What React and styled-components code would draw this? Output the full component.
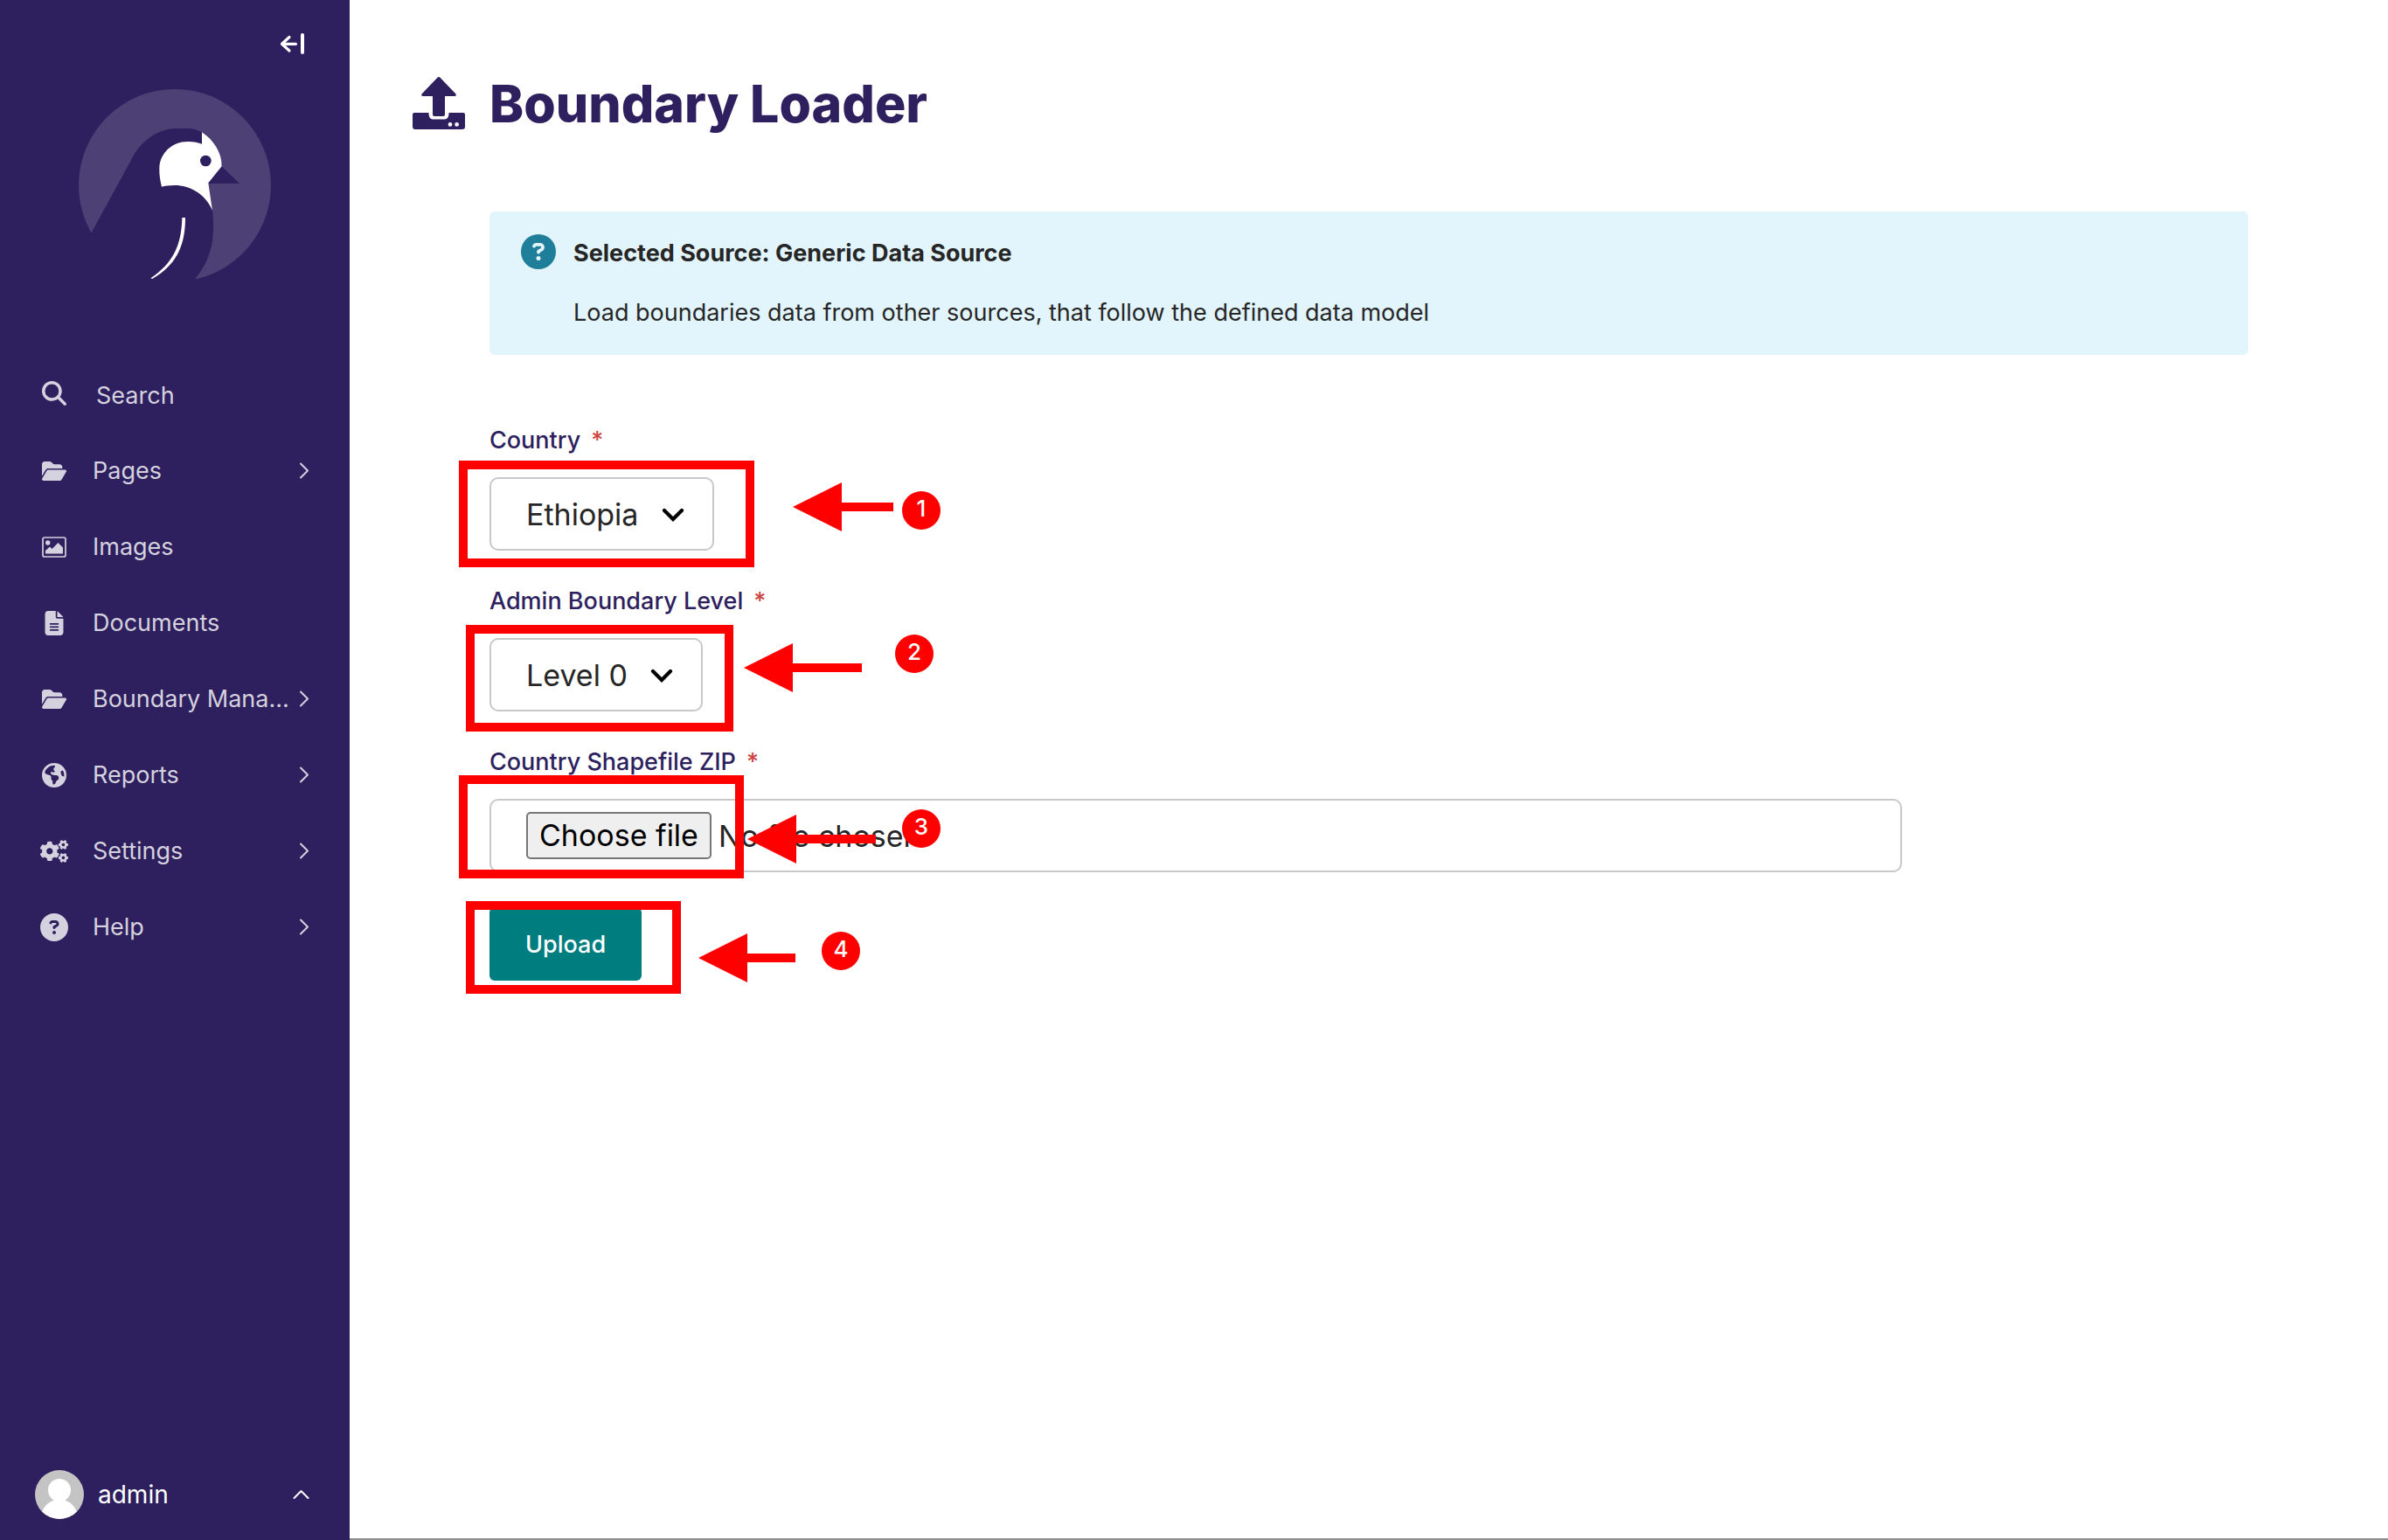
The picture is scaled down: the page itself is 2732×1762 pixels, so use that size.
import React from "react";
import styled, { createGlobalStyle } from "styled-components";
import {
  FaMagnifyingGlass,
  FaFolderOpen,
  FaFileLines,
  FaCircleQuestion,
  FaEarthAmericas,
} from "react-icons/fa6";
import { FaCogs } from "react-icons/fa";

const colors = {
  primary: "#2e1f5e",
  menuText: "#d5d2df",
  text: "#262626",
  border: "#c8c8c8",
  button: "#007d7e",
  info: "#1f7e9a",
  infoBg: "#e2f4fc",
  mark: "#ff0000",
};

const GlobalStyle = createGlobalStyle`
  *, *::before, *::after { box-sizing: border-box; }
  body { margin: 0; background: #fff; }
  body, button, input, select {
    font-family: Inter, "Open Sans", "Liberation Sans", sans-serif;
  }
`;

const Page = styled.div`
  display: flex;
  min-height: 100vh;
  color: ${colors.text};
`;

/* ---------- Sidebar ---------- */

const Sidebar = styled.aside`
  flex: none;
  display: flex;
  flex-direction: column;
  width: 400px;
  background: ${colors.primary};
`;

const CollapseButton = styled.button`
  align-self: flex-end;
  display: flex;
  margin: 36px 50px 0 0;
  padding: 0;
  border: 0;
  background: none;
  color: #fff;
`;

const LogoLink = styled.a`
  align-self: center;
  display: flex;
  margin: 38px 0 86px;
`;

const Menu = styled.nav`
  display: flex;
  flex-direction: column;
`;

const IconSlot = styled.span`
  flex: none;
  display: flex;
  justify-content: center;
  width: 32px;
`;

const SearchRow = styled.label`
  display: flex;
  align-items: center;
  gap: 32px;
  height: 87px;
  padding: 0 46px;
  color: ${colors.menuText};

  ${IconSlot} {
    padding-bottom: 4px;
  }
`;

const SearchInput = styled.input`
  flex: 1;
  min-width: 0;
  padding: 2px 0 0;
  border: 0;
  outline: 0;
  background: none;
  color: inherit;
  font-size: 27px;
  line-height: 36px;
  &::placeholder { color: inherit; opacity: 1; }
`;

const MenuItem = styled.a`
  display: flex;
  align-items: center;
  height: 87px;
  padding: 0 46px;
  color: ${colors.menuText};
  font-size: 27px;
  line-height: 36px;
  text-decoration: none;

  ${IconSlot} {
    margin-right: 28px;
  }
`;

const MenuLabel = styled.span`
  flex: 1;
  white-space: nowrap;
`;

const Account = styled.button`
  display: flex;
  align-items: center;
  gap: 16px;
  margin-top: auto;
  padding: 24px 46px 24px 40px;
  border: 0;
  background: none;
  color: #fff;
  font-size: 28px;
  line-height: 36px;
  text-align: left;
`;

/* ---------- Content ---------- */

const Main = styled.main`
  flex: 1;
  min-width: 0;
  padding: 76px 160px 0 72px;
  border-bottom: 2px solid #8e8e8e;
`;

const Header = styled.header`
  display: flex;
  align-items: center;
  gap: 28px;
  height: 86px;
  margin-bottom: 80px;
  color: ${colors.primary};
`;

const Title = styled.h1`
  margin: 0;
  font-size: 59px;
  line-height: 72px;
  font-weight: 800;
`;

const Body = styled.div`
  margin-left: 88px;
`;

const InfoPanel = styled.section`
  display: flex;
  gap: 20px;
  margin-bottom: 80px;
  padding: 26px 36px;
  border-radius: 6px;
  background: ${colors.infoBg};
  color: ${colors.info};
`;

const InfoText = styled.div`
  display: flex;
  flex-direction: column;
  gap: 28px;
  padding: 2px 0;
  color: ${colors.text};
  font-size: 27px;
  line-height: 40px;
`;

const InfoTitle = styled.strong`
  font-weight: 700;
`;

const InfoBody = styled.p`
  margin: 0;
`;

const Form = styled.form`
  display: flex;
  flex-direction: column;
  align-items: flex-start;
  gap: 40px;
`;

const Field = styled.div`
  display: flex;
  flex-direction: column;
  align-items: flex-start;
  gap: 24px;
  width: 100%;
`;

const FieldLabel = styled.label`
  color: ${colors.primary};
  font-size: 27px;
  line-height: 36px;
  font-weight: 500;
`;

const Required = styled.span`
  margin-left: 12px;
  color: #cd4444;
`;

const Control = styled.div`
  position: relative;
  width: ${(p) => (p.$wide ? "100%" : "auto")};
  max-width: 1616px;
`;

const Select = styled.select`
  display: block;
  appearance: none;
  height: 84px;
  padding: 0 84px 0 40px;
  border: 2px solid ${colors.border};
  border-radius: 10px;
  background: #fff;
  color: ${colors.text};
  font-size: 34px;
`;

const SelectArrow = styled.svg`
  position: absolute;
  right: 34px;
  top: 34px;
  pointer-events: none;
`;

const FileBox = styled.label`
  display: flex;
  align-items: center;
  gap: 8px;
  height: 84px;
  padding: 0 40px;
  border: 2px solid ${colors.border};
  border-radius: 10px;
  font-size: 34px;
`;

const FileInput = styled.input`
  position: absolute;
  opacity: 0;
  width: 1px;
  height: 1px;
`;

const FileButton = styled.span`
  padding: 0 13px;
  border: 2px solid #767676;
  border-radius: 5px;
  background: #efefef;
  color: #000;
  line-height: 50px;
`;

const SubmitButton = styled.button`
  display: block;
  height: 84px;
  padding: 0 41px;
  border: 0;
  border-radius: 6px;
  background: ${colors.button};
  color: #fff;
  font-size: 27px;
  font-weight: 500;
`;

/* ---------- Step marks, drawn over the form ---------- */

const Frame = styled.div`
  position: absolute;
  left: ${(p) => p.$x}px;
  top: ${(p) => p.$y}px;
  width: ${(p) => p.$w}px;
  height: ${(p) => p.$h}px;
  border: 10px solid ${colors.mark};
  pointer-events: none;
`;

const ArrowSvg = styled.svg`
  position: absolute;
  left: ${(p) => p.$x}px;
  top: ${(p) => p.$y}px;
  fill: ${colors.mark};
  pointer-events: none;
`;

const Badge = styled.span`
  position: absolute;
  left: ${(p) => p.$x}px;
  top: ${(p) => p.$y}px;
  width: 44px;
  height: 44px;
  border-radius: 50%;
  background: ${colors.mark};
  color: #fff;
  font-size: 26px;
  line-height: 40px;
  font-weight: 500;
  text-align: center;
`;

function Step({ number, frame, arrow, badge }) {
  const [x, y, length] = arrow;
  return (
    <>
      <Frame $x={frame[0]} $y={frame[1]} $w={frame[2]} $h={frame[3]} />
      <ArrowSvg $x={x} $y={y} width={length} height="56" aria-hidden="true">
        <path d={`M0 28L56 0V23H${length}V33H56V56Z`} />
      </ArrowSvg>
      <Badge $x={badge[0]} $y={badge[1]}>{number}</Badge>
    </>
  );
}

/* ---------- Drawings ---------- */

const CollapseIcon = () => (
  <svg width="30" height="28" viewBox="0 0 30 28" fill="none" stroke="currentColor" strokeLinecap="round" strokeLinejoin="round" aria-hidden="true">
    <path d="M11 6.500L2.500 14.300L11 22M3 14.300H18.500" strokeWidth="3.200" />
    <path d="M26 4V24" strokeWidth="4" />
  </svg>
);

const Logo = () => (
  <svg width="220" height="220" viewBox="270 306 660 660" aria-hidden="true">
    <circle cx="600" cy="636" r="330" fill="#4d4075" />
    <path
      fill={colors.primary}
      d="M313 800L447 555C485 475 550 441 605 441H640C665 441 681 447 693 454C740 485 762 525 761 571L822 630H715L729 722C737 800 735 880 668 960L640 975H270V880Z"
    />
    <path
      fill="#fff"
      d="M693 454C735 482 762 525 761 571L715 628L729 722C705 665 650 636 600 636C580 636 565 639 555 641C550 620 546 600 547 575C550 525 590 486 645 486C665 486 682 490 693 494Z"
    />
    <circle cx="706" cy="552" r="19" fill={colors.primary} />
    <path fill="#fff" d="M625 747H636C636 840 608 908 523 957L517 955C596 902 623 840 625 747Z" />
  </svg>
);

const ImageIcon = () => (
  <svg width="28" height="24" viewBox="0 0 28 24" fill="currentColor" aria-hidden="true">
    <rect x="1" y="1" width="26" height="22" rx="2" fill="none" stroke="currentColor" strokeWidth="1.700" />
    <circle cx="6.700" cy="7" r="2.700" />
    <path d="M4 19.500V16L9 11.500L11.500 14L18.500 7L24 12.500V19.500Z" />
  </svg>
);

const ChevronSvg = styled.svg`
  flex: none;
  fill: none;
  stroke: currentColor;
  stroke-width: 2px;
  stroke-linecap: round;
  stroke-linejoin: round;
`;

const Chevron = ({ up }) => (
  <ChevronSvg
    width={up ? 19 : 12}
    height={up ? 12 : 19}
    viewBox={up ? "0 0 19 12" : "0 0 12 19"}
    aria-hidden="true"
  >
    <path d={up ? "M1.500 10L9.500 2L17.500 10" : "M2 1.500L10 9.500L2 17.500"} />
  </ChevronSvg>
);

const Avatar = () => (
  <svg width="56" height="56" viewBox="0 0 56 56" aria-hidden="true">
    <clipPath id="avatar-clip"><circle cx="28" cy="28" r="28" /></clipPath>
    <g clipPath="url(#avatar-clip)">
      <rect width="56" height="56" fill="#c4c4c4" />
      <path fill="#fff" d="M28 10C35 10 41 15.500 41 22.500C41 28 38.500 32 34.500 34.500C41 37 45 41 48 48L40 58H16L8 48C11 41 15 37 21.500 34.500C17.500 32 15 28 15 22.500C15 15.500 21 10 28 10Z" />
    </g>
  </svg>
);

const LoaderIcon = () => (
  <svg width="60" height="62" viewBox="0 0 60 62" fill="currentColor" aria-hidden="true">
    <path d="M28.500 .8Q30 -.6 31.500 .8L49.500 19.500Q50.500 22 48 22H37V43Q37 45 35 45H25Q23 45 23 43V22H12Q9.500 22 10.500 19.500Z" />
    <path
      fillRule="evenodd"
      d="M2 41H18.500C18.500 46 20 48.500 24 48.500H36C40 48.500 41.500 46 41.500 41H58Q60 41 60 43V57Q60 60 57 60H3Q0 60 0 57V43Q0 41 2 41ZM43 52A2.400 2.400 0 1 0 43 56.800A2.400 2.400 0 1 0 43 52ZM50.600 52A2.400 2.400 0 1 0 50.600 56.800A2.400 2.400 0 1 0 50.600 52Z"
    />
  </svg>
);

const DownArrow = () => (
  <SelectArrow width="26" height="18" viewBox="0 0 26 18" fill="none" stroke="#000" strokeWidth="4.200" strokeLinecap="round" aria-hidden="true">
    <path d="M3 4L13 14L23 4" />
  </SelectArrow>
);

const menu = [
  { label: "Pages", icon: <FaFolderOpen size={28} />, more: true },
  { label: "Images", icon: <ImageIcon /> },
  { label: "Documents", icon: <FaFileLines size={28} /> },
  { label: "Boundary Mana...", icon: <FaFolderOpen size={28} />, more: true },
  { label: "Reports", icon: <FaEarthAmericas size={28} />, more: true },
  { label: "Settings", icon: <FaCogs size={32} />, more: true },
  { label: "Help", icon: <FaCircleQuestion size={32} />, more: true },
];

export default function App() {
  return (
    <Page>
      <GlobalStyle />
      <Sidebar>
        <CollapseButton type="button" aria-label="Collapse menu"><CollapseIcon /></CollapseButton>
        <LogoLink href="#" aria-label="Dashboard"><Logo /></LogoLink>
        <Menu>
          <SearchRow>
            <IconSlot><FaMagnifyingGlass size={28} /></IconSlot>
            <SearchInput type="text" placeholder="Search" aria-label="Search" />
          </SearchRow>
          {menu.map((item) => (
            <MenuItem href="#" key={item.label}>
              <IconSlot>{item.icon}</IconSlot>
              <MenuLabel>{item.label}</MenuLabel>
              {item.more && <Chevron />}
            </MenuItem>
          ))}
        </Menu>
        <Account type="button">
          <Avatar />
          <MenuLabel>admin</MenuLabel>
          <Chevron up />
        </Account>
      </Sidebar>

      <Main>
        <Header>
          <LoaderIcon />
          <Title>Boundary Loader</Title>
        </Header>
        <Body>
          <InfoPanel>
            <FaCircleQuestion size={40} />
            <InfoText>
              <InfoTitle>Selected Source: Generic Data Source</InfoTitle>
              <InfoBody>Load boundaries data from other sources, that follow the defined data model</InfoBody>
            </InfoText>
          </InfoPanel>

          <Form>
            <Field>
              <FieldLabel htmlFor="country">Country<Required>*</Required></FieldLabel>
              <Control>
                <Select id="country"><option>Ethiopia</option></Select>
                <DownArrow />
                <Step number={1} frame={[-35, -19, 338, 122]} arrow={[347, 6, 115]} badge={[472, 16]} />
              </Control>
            </Field>
            <Field>
              <FieldLabel htmlFor="level">Admin Boundary Level<Required>*</Required></FieldLabel>
              <Control>
                <Select id="level"><option>Level 0</option></Select>
                <DownArrow />
                <Step number={2} frame={[-27, -15, 306, 122]} arrow={[291, 6, 135]} badge={[464, -4]} />
              </Control>
            </Field>
            <Field>
              <FieldLabel htmlFor="shapefile">Country Shapefile ZIP<Required>*</Required></FieldLabel>
              <Control $wide>
                <FileInput id="shapefile" type="file" accept=".zip" />
                <FileBox htmlFor="shapefile">
                  <FileButton>Choose file</FileButton>
                  <span>No file chosen</span>
                </FileBox>
                <Step number={3} frame={[-35, -27, 326, 118]} arrow={[295, 18, 147]} badge={[472, 12]} />
              </Control>
            </Field>
            <Control>
              <SubmitButton type="button">Upload</SubmitButton>
              <Step number={4} frame={[-27, -7, 246, 106]} arrow={[239, 30, 111]} badge={[380, 28]} />
            </Control>
          </Form>
        </Body>
      </Main>
    </Page>
  );
}
